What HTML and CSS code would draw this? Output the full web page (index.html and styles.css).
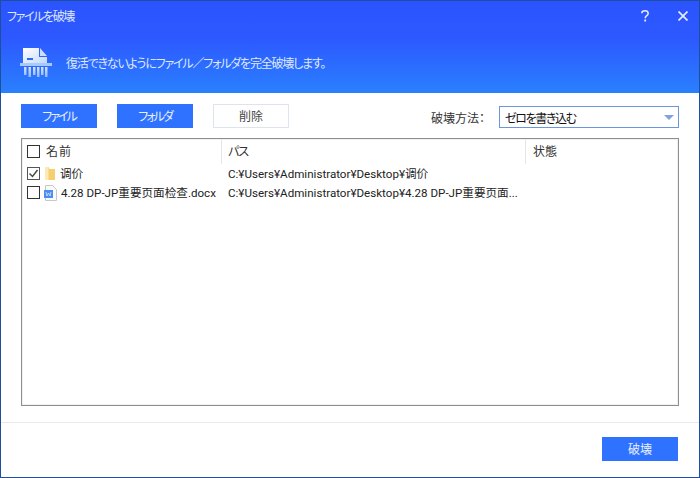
FILE: index.html
```html
<!DOCTYPE html>
<html lang="ja">
<head>
<meta charset="utf-8">
<title>ファイルを破壊</title>
<link rel="stylesheet" href="styles.css">
</head>
<body>
<div class="window">
  <header class="hero">
    <div class="titlebar">
      <span class="title">ファイルを破壊</span>
      <div class="winbtns">
        <svg class="winicon" width="8" height="12" viewBox="0 0 8 12"><path d="M.8 3.200C.8 1.600 2.200.800 4 .800s3.200 1 3.200 2.600c0 2.300-3 2.200-3 4.800" fill="none" stroke="#e4ecff" stroke-width="1.500"/><rect x="3.300" y="9.500" width="1.800" height="2" fill="#e4ecff"/></svg>
        <svg class="winicon" width="10" height="10" viewBox="0 0 10 10"><path d="M.5.500l9 9M9.500.500l-9 9" stroke="#e4ecff" stroke-width="1.700" fill="none"/></svg>
      </div>
    </div>
    <div class="banner">
      <svg class="shredder" width="32" height="31" viewBox="0 0 32 31">
        <defs>
          <linearGradient id="pg" x1="0" y1="0" x2="1" y2="1"><stop offset="0" stop-color="#ffffff"/><stop offset="1" stop-color="#c4d8fb"/></linearGradient>
          <linearGradient id="sg" x1="0" y1="0" x2="0" y2="1"><stop offset="0" stop-color="#d4e3fd"/><stop offset="1" stop-color="#8fb8fb"/></linearGradient>
        </defs>
        <path d="M3 1h16v9h8v6H3z" fill="url(#pg)"/>
        <path d="M20 1l7 8h-7z" fill="#cfdcf9"/>
        <rect x="7" y="11" width="6" height="2" fill="#2f6cf0"/>
        <rect x="0" y="16" width="32" height="3" fill="#a9c8fb"/>
        <path d="M4 20h2.500v8H4zM8.500 20H11v10H8.500zM13 20h2.500v8H13zM17 20h2.500v10H17zM21 20h2.500v8H21zM25 20h2.500v10H25z" fill="url(#sg)"/>
      </svg>
      <span class="banner-text">復活できないようにファイル／フォルダを完全破壊します。</span>
    </div>
  </header>
  <main class="content">
    <div class="toolbar">
      <button class="btn primary kana">ファイル</button>
      <button class="btn primary kana">フォルダ</button>
      <button class="btn ghost">削除</button>
      <div class="method">
        <span class="method-label">破壊方法：</span>
        <div class="combo"><span class="combo-text">ゼロを書き込む</span><i class="arrow"></i></div>
      </div>
    </div>
    <section class="list">
      <div class="list-head">
        <div class="col col-name"><span class="check"></span><span class="head-name">名前</span></div>
        <div class="col col-path">パス</div>
        <div class="col col-state">状態</div>
      </div>
      <div class="row">
        <div class="col-name cell"><span class="check checked"><svg width="11" height="11" viewBox="0 0 11 11"><path d="M1.500 5.500l3 3 5-6.500" fill="none" stroke="#444" stroke-width="1.400"/></svg></span>
          <svg class="ficon" width="10" height="13" viewBox="0 0 10 13"><path d="M0 0h3.500l1 2H10v11H0z" fill="#f5cf70"/><path d="M0 0h3.500v13H0z" fill="#fbe9b8"/></svg>
          <span class="fname">调价</span></div>
        <div class="cell col-path">C:¥Users¥Administrator¥Desktop¥调价</div>
      </div>
      <div class="row">
        <div class="col-name cell"><span class="check"></span>
          <svg class="ficon doc-icon" width="13" height="16" viewBox="0 0 13 16"><path d="M1.500.500h7l4 4v11h-11z" fill="#fafafa" stroke="#c4c8cc"/><rect x="0" y="5" width="9" height="8" fill="#4a8ef0"/><path d="M2 7l1 4 1.500-3L6 11l1-4" fill="none" stroke="#d8e6fc" stroke-width=".8"/></svg>
          <span class="fname doc">4.28 DP-JP重要页面检查.docx</span></div>
        <div class="cell col-path">C:¥Users¥Administrator¥Desktop¥4.28 DP-JP重要页面...</div>
      </div>
    </section>
  </main>
  <footer class="footer">
    <button class="btn primary">破壊</button>
  </footer>
</div>
</body>
</html>
```
FILE: styles.css
```css
* { box-sizing: border-box; }
html, body { margin: 0; padding: 0; background: #fff; }
body {
  width: 700px;
  height: 478px;
  overflow: hidden;
  font-family: Roboto, "Noto Sans CJK JP", sans-serif;
  font-size: 12px;
  font-feature-settings: "palt";
  color: #222;
}
.window {
  width: 700px;
  height: 478px;
  border: 1px solid #1c4f9c;
  display: flex;
  flex-direction: column;
  background: #fff;
}
.hero {
  height: 92px;
  flex: none;
  background: linear-gradient(180deg, #2b54ff 0%, #2d58ff 40%, #2a80ff 100%);
  color: #dfe8ff;
  padding: 0 11px 0 6px;
}
.titlebar {
  height: 30px;
  display: flex;
  align-items: center;
  justify-content: space-between;
}
.title { line-height: 30px; padding-top: 2px; letter-spacing: -1.400px; }
.winbtns { display: flex; align-items: center; gap: 29px; }
.winicon { display: block; }
.banner {
  display: flex;
  align-items: center;
  height: 31px;
  margin-top: 16px;
  padding-left: 13px;
}
.shredder { flex: none; margin-right: 14px; }
.banner-text { line-height: 31px; padding-top: 4px; letter-spacing: -1.200px; }
.content {
  flex: 1;
  padding: 11px 20px 0;
  display: flex;
  flex-direction: column;
}
.toolbar {
  display: flex;
  align-items: flex-start;
  height: 34px;
  gap: 20px;
}
.btn {
  width: 76px;
  height: 24px;
  padding: 2px 0 0;
  border: 0;
  font: inherit;
  font-feature-settings: inherit;
  line-height: 22px;
}
.kana { letter-spacing: -2px; }
.primary { background: #2f72ff; color: #e9f0ff; }
.ghost { background: #fff; border: 1px solid #dfe3ee; color: #444; line-height: 20px; }
.method {
  margin-left: auto;
  display: flex;
  align-items: center;
  margin-top: 2px;
}
.method-label { margin-right: 14px; color: #333; }
.combo {
  width: 180px;
  height: 22px;
  border: 1px solid #6a97dc;
  display: flex;
  align-items: center;
  justify-content: space-between;
  padding: 0 4px 0 5px;
  color: #111;
}
.combo-text { letter-spacing: -1.400px; }
.arrow {
  width: 0;
  height: 0;
  border-left: 5px solid transparent;
  border-right: 5px solid transparent;
  border-top: 5px solid #7fa3de;
}
.list {
  height: 268px;
  border: 1px solid #8a8f96;
  box-shadow: inset 0 0 0 1px #f1f1f1;
  display: flex;
  flex-direction: column;
}
.list-head {
  display: flex;
  height: 25px;
  flex: none;
}
.col { border-right: 1px solid #e6e6e6; line-height: 25px; color: #333; }
.col-name { width: 200px; flex: none; display: flex; align-items: center; }
.list-head .col-name { padding-left: 5px; }
.head-name { margin-left: 6px; letter-spacing: 1px; padding-top: 2px; }
.list-head .col-path { width: 304px; flex: none; padding: 1px 0 0 6px; letter-spacing: -1px; }
.col-state { padding: 1px 0 0 7px; border-right: 0; width: 148px; flex: none; }
.check {
  width: 13px;
  height: 13px;
  flex: none;
  border: 1px solid #333;
  background: #fff;
  display: flex;
  align-items: center;
  justify-content: center;
}
.checked { border-color: #555; }
.row { display: flex; height: 19px; align-items: center; font-size: 11.600px; }
.cell { line-height: 19px; color: #222; white-space: nowrap; }
.row .col-name { padding-left: 5px; }
.row .col-path { padding: 2px 0 0 6px; }
.ficon { flex: none; margin-left: 5px; display: block; }
.doc-icon { margin-left: 4px; }
.fname { margin-left: 5px; padding-top: 2px; }
.doc { margin-left: 4px; }
.footer {
  height: 55px;
  flex: none;
  margin-top: 16px;
  border-top: 1px solid #e8e8f0;
  display: flex;
  justify-content: flex-end;
  align-items: flex-start;
  padding: 14px 21px 0 0;
}
```
